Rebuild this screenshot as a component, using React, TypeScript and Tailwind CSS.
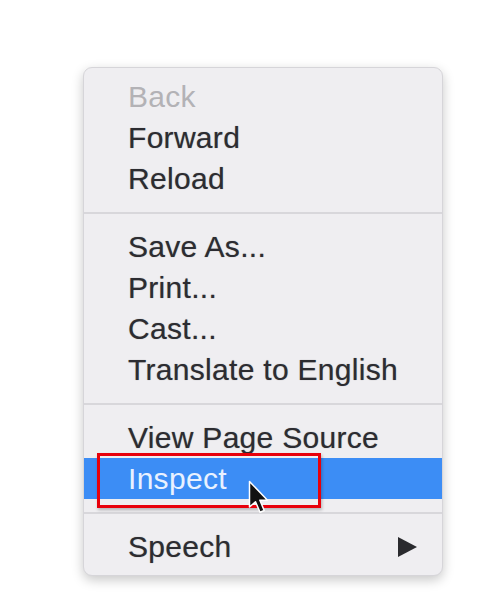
import React from "react";

type Item = { label: string; disabled?: boolean; active?: boolean; submenu?: boolean };

const groups: Item[][] = [
  [{ label: "Back", disabled: true }, { label: "Forward" }, { label: "Reload" }],
  [{ label: "Save As..." }, { label: "Print..." }, { label: "Cast..." }, { label: "Translate to English" }],
  [{ label: "View Page Source" }, { label: "Inspect", active: true }],
  [{ label: "Speech", submenu: true }],
];

const Cursor: React.FC = () => (
  <svg
    className="absolute left-[164px] top-[22px] h-[36px] w-[24px]"
    viewBox="0 0 16 24"
    xmlns="http://www.w3.org/2000/svg"
  >
    <path
      d="M1 1 L1 18 L5 14.5 L8 21.5 L10.8 20.3 L7.9 13.5 L13 13.5 Z"
      fill="#111"
      stroke="#fff"
      strokeWidth={1}
      strokeLinejoin="round"
    />
  </svg>
);

const MenuRow: React.FC<{ item: Item }> = ({ item }) => (
  <div
    className={
      "relative flex h-[41px] items-center pl-[44px] pr-[25px] " +
      (item.active
        ? "bg-[#3c8df5] text-[#e9f1ff]"
        : item.disabled
          ? "text-[#b3b2b6]"
          : "text-[#2c2c31] [text-shadow:0_0_1px_rgba(0,0,0,0.4)]")
    }
  >
    <span className="flex-1 leading-[41px] tracking-[0.3px]">{item.label}</span>
    {item.submenu && (
      <svg className="h-[20px] w-[20px]" viewBox="0 0 20 20">
        <path d="M1 0 L20 10 L1 20 Z" fill="#2a2a2e" />
      </svg>
    )}
    {item.active && (
      <>
        {/* annotation box drawn over the highlighted row */}
        <div className="absolute left-[13px] top-[-5px] h-[55px] w-[224px] border-[3px] border-[#e8000b] shadow-[1px_2px_3px_rgba(0,0,0,0.25)]" />
        <Cursor />
      </>
    )}
  </div>
);

export default function App() {
  return (
    <div className="min-h-[600px] w-[488px] bg-white pl-[83px] pt-[67px] font-['Liberation_Sans',Arial,sans-serif]">
      <div className="w-[360px] rounded-[9px] border border-[#d6d5d9] bg-[#efeef1] py-[8px] text-[30px] shadow-[0_4px_12px_rgba(0,0,0,0.22)]">
        {groups.map((group, gi) => (
          <div key={gi}>
            {gi > 0 && (
              <div className="flex h-[27px] items-center">
                <div className="h-[2px] w-full bg-[#d8d7db]" />
              </div>
            )}
            {group.map((item) => (
              <MenuRow key={item.label} item={item} />
            ))}
          </div>
        ))}
      </div>
    </div>
  );
}
